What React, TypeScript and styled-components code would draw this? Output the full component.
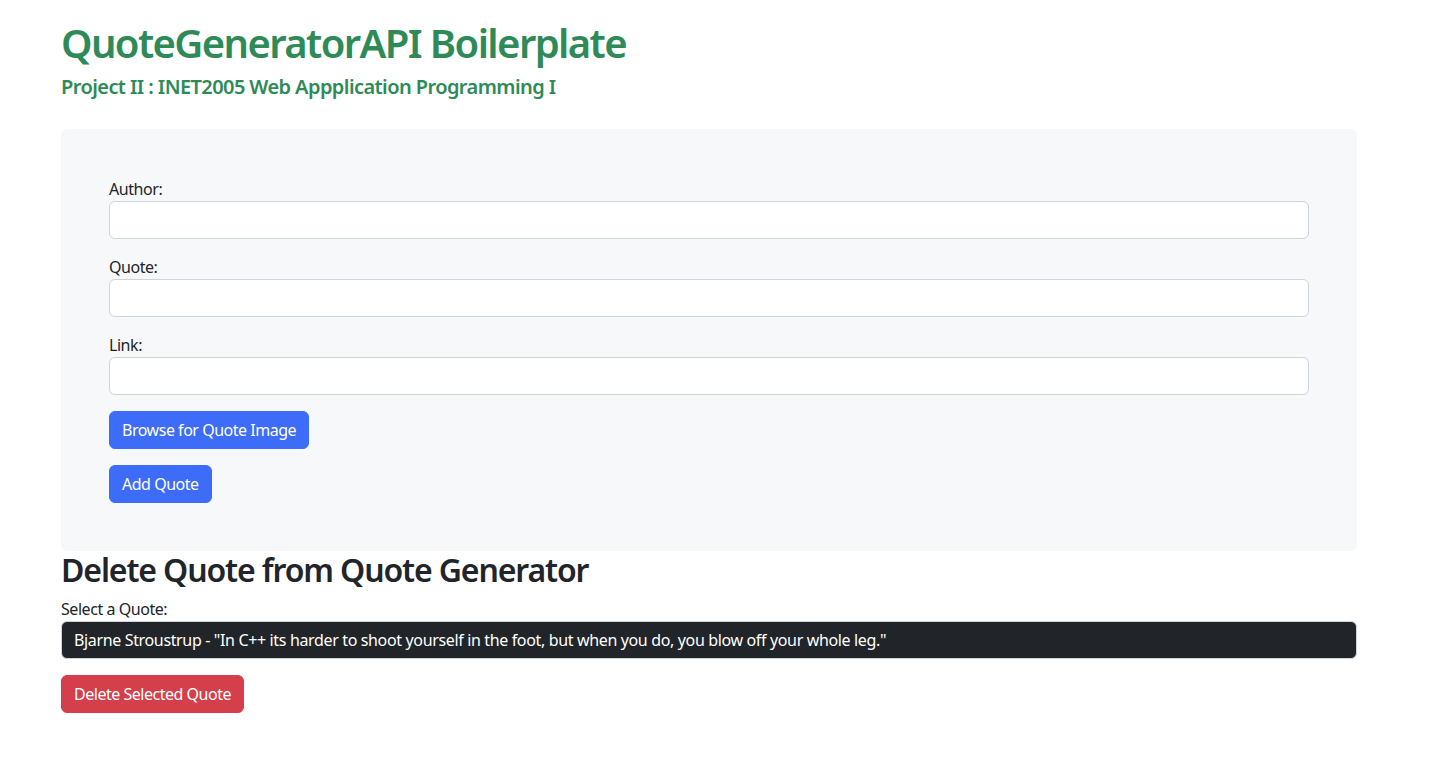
import React from "react";
import styled, { createGlobalStyle } from "styled-components";

const Global = createGlobalStyle`
  html, body { margin: 0; padding: 0; background: #fff; }
  body {
    font-family: "Noto Sans", "Open Sans", sans-serif;
    font-size: 16px;
    line-height: 1.5;
    letter-spacing: -0.028em;
    color: #212529;
  }
  * { box-sizing: border-box; }
`;

const Container = styled.div`
  width: 1296px;
  margin: 0 auto 0 61px;
  padding-top: 19px;
`;

const Title = styled.h1`
  margin: 0 0 8px;
  font-size: 40px;
  font-weight: 600;
  line-height: 1.2;
  letter-spacing: -0.04em;
  color: #2e8b57;
`;

const Subtitle = styled.h5`
  margin: 0 0 30px;
  font-size: 20px;
  font-weight: 600;
  line-height: 1.2;
  letter-spacing: -0.029em;
  color: #2e8b57;
`;

const Panel = styled.div`
  background: #f7f8fa;
  border-radius: 6px;
  padding: 48px;
  display: flex;
  flex-direction: column;
  align-items: flex-start;
`;

const Field = styled.div`
  width: 100%;
  margin-bottom: 16px;
`;

const Label = styled.label`
  display: block;
  font-size: 16px;
  line-height: 24px;
  color: #212529;
`;

const Input = styled.input`
  display: block;
  width: 100%;
  height: 38px;
  padding: 6px 12px;
  font: inherit;
  letter-spacing: inherit;
  background: #fff;
  border: 1px solid #ced4da;
  border-radius: 6px;
  outline: none;
`;

const Button = styled.button<{ $variant: "primary" | "danger" }>`
  height: 38px;
  padding: 6px 12px;
  font: inherit;
  font-size: 16px;
  line-height: 24px;
  letter-spacing: -0.03em;
  color: #fff;
  background: ${(p) => (p.$variant === "primary" ? "#3d6cf9" : "#d43f4b")};
  border: 1px solid ${(p) => (p.$variant === "primary" ? "#3d6cf9" : "#d43f4b")};
  border-radius: 6px;
  cursor: pointer;
`;

const ButtonRow = styled.div`
  margin-bottom: 16px;
  &:last-child { margin-bottom: 0; }
`;

const SectionTitle = styled.h2`
  margin: 0 0 8px;
  font-size: 32px;
  font-weight: 600;
  line-height: 1.2;
  letter-spacing: -0.035em;
  color: #212529;
`;

const DeleteSection = styled.div``;

const Select = styled.select`
  display: block;
  width: 100%;
  height: 38px;
  padding: 6px 12px;
  font: inherit;
  letter-spacing: -0.022em;
  color: #fff;
  background: #212529;
  border: 1px solid #ced4da;
  border-radius: 6px;
  appearance: none;
  -webkit-appearance: none;
  outline: none;
  margin-bottom: 16px;
`;

export default function App() {
  return (
    <>
      <Global />
      <Container>
        <Title>QuoteGeneratorAPI Boilerplate</Title>
        <Subtitle>Project II : INET2005 Web Appplication Programming I</Subtitle>
        <Panel>
          <Field>
            <Label>Author:</Label>
            <Input type="text" />
          </Field>
          <Field>
            <Label>Quote:</Label>
            <Input type="text" />
          </Field>
          <Field>
            <Label>Link:</Label>
            <Input type="text" />
          </Field>
          <ButtonRow>
            <Button $variant="primary">Browse for Quote Image</Button>
          </ButtonRow>
          <ButtonRow>
            <Button $variant="primary">Add Quote</Button>
          </ButtonRow>
        </Panel>
        <DeleteSection>
          <SectionTitle>Delete Quote from Quote Generator</SectionTitle>
          <Label>Select a Quote:</Label>
          <Select defaultValue="1">
            <option value="1">
              Bjarne Stroustrup - "In C++ its harder to shoot yourself in the foot, but when you do, you blow off your whole leg."
            </option>
          </Select>
          <Button $variant="danger">Delete Selected Quote</Button>
        </DeleteSection>
      </Container>
    </>
  );
}
